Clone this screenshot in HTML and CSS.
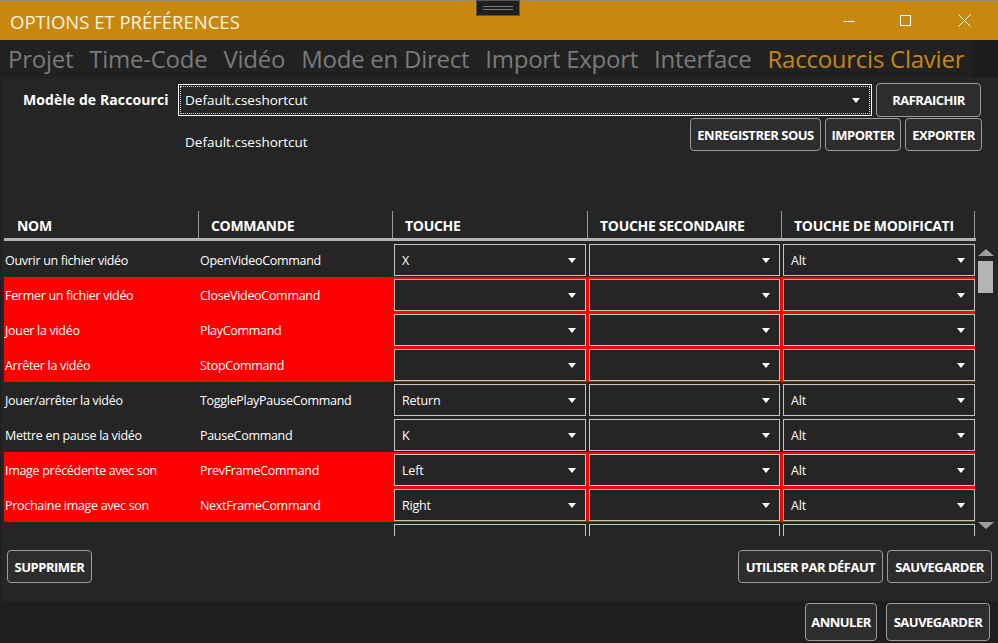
FILE: index.html
```html
<!DOCTYPE html>
<html lang="fr">
<head>
<meta charset="utf-8">
<title>Options et préférences</title>
<link rel="stylesheet" href="styles.css">
</head>
<body>
<div class="window">
  <div class="titlebar">
    <span class="title">OPTIONS ET PRÉFÉRENCES</span>
    <div class="winctrls">
      <span class="wc wc-min"><svg width="12" height="12" viewBox="0 0 12 12"><path d="M0.5 6.5h11" stroke="#fff" stroke-width="1"/></svg></span>
      <span class="wc wc-max"><svg width="12" height="12" viewBox="0 0 12 12"><rect x="0.5" y="0.5" width="10" height="10" fill="none" stroke="#fff" stroke-width="1"/></svg></span>
      <span class="wc wc-close"><svg width="13" height="13" viewBox="0 0 13 13"><path d="M0.5 0.5l12 12M12.5 0.5l-12 12" stroke="#fff" stroke-width="1"/></svg></span>
    </div>
    <div class="handle"><span></span><span></span></div>
  </div>

  <div class="tabstrip">
    <div class="tabs">
      <span class="tab">Projet</span>
      <span class="tab">Time-Code</span>
      <span class="tab">Vidéo</span>
      <span class="tab">Mode en Direct</span>
      <span class="tab">Import Export</span>
      <span class="tab">Interface</span>
      <span class="tab active">Raccourcis Clavier</span>
    </div>
  </div>

  <div class="panel">
    <div class="row1">
      <span class="lbl">Modèle de Raccourci</span>
      <div class="maincombo">
        <div class="focus">
          <span>Default.cseshortcut</span>
          <i class="arrow"></i>
        </div>
      </div>
      <button class="btn btn-refresh">RAFRAICHIR</button>
    </div>
    <div class="row2">
      <span class="filename">Default.cseshortcut</span>
      <div class="btns">
        <button class="btn b-save-as">ENREGISTRER SOUS</button>
        <button class="btn b-import">IMPORTER</button>
        <button class="btn b-export">EXPORTER</button>
      </div>
    </div>

    <div class="grid">
      <div class="ghead">
        <div class="hc">NOM</div>
        <div class="hc sep">COMMANDE</div>
        <div class="hc sep">TOUCHE</div>
        <div class="hc sep">TOUCHE SECONDAIRE</div>
        <div class="hc sep sepr">TOUCHE DE MODIFICATI</div>
      </div>
      <div class="gbody">
        <div class="rows">
          <div class="row">
            <div class="c">Ouvrir un fichier vidéo</div>
            <div class="c">OpenVideoCommand</div>
            <div class="cb"><span>X</span><i class="arrow"></i></div>
            <div class="cb"><span></span><i class="arrow"></i></div>
            <div class="cb"><span>Alt</span><i class="arrow"></i></div>
          </div>
          <div class="row red">
            <div class="c">Fermer un fichier vidéo</div>
            <div class="c">CloseVideoCommand</div>
            <div class="cb"><span></span><i class="arrow"></i></div>
            <div class="cb"><span></span><i class="arrow"></i></div>
            <div class="cb"><span></span><i class="arrow"></i></div>
          </div>
          <div class="row red">
            <div class="c">Jouer la vidéo</div>
            <div class="c">PlayCommand</div>
            <div class="cb"><span></span><i class="arrow"></i></div>
            <div class="cb"><span></span><i class="arrow"></i></div>
            <div class="cb"><span></span><i class="arrow"></i></div>
          </div>
          <div class="row red">
            <div class="c">Arrêter la vidéo</div>
            <div class="c">StopCommand</div>
            <div class="cb"><span></span><i class="arrow"></i></div>
            <div class="cb"><span></span><i class="arrow"></i></div>
            <div class="cb"><span></span><i class="arrow"></i></div>
          </div>
          <div class="row">
            <div class="c">Jouer/arrêter la vidéo</div>
            <div class="c">TogglePlayPauseCommand</div>
            <div class="cb"><span>Return</span><i class="arrow"></i></div>
            <div class="cb"><span></span><i class="arrow"></i></div>
            <div class="cb"><span>Alt</span><i class="arrow"></i></div>
          </div>
          <div class="row">
            <div class="c">Mettre en pause la vidéo</div>
            <div class="c">PauseCommand</div>
            <div class="cb"><span>K</span><i class="arrow"></i></div>
            <div class="cb"><span></span><i class="arrow"></i></div>
            <div class="cb"><span>Alt</span><i class="arrow"></i></div>
          </div>
          <div class="row red">
            <div class="c">Image précédente avec son</div>
            <div class="c">PrevFrameCommand</div>
            <div class="cb"><span>Left</span><i class="arrow"></i></div>
            <div class="cb"><span></span><i class="arrow"></i></div>
            <div class="cb"><span>Alt</span><i class="arrow"></i></div>
          </div>
          <div class="row red">
            <div class="c">Prochaine image avec son</div>
            <div class="c">NextFrameCommand</div>
            <div class="cb"><span>Right</span><i class="arrow"></i></div>
            <div class="cb"><span></span><i class="arrow"></i></div>
            <div class="cb"><span>Alt</span><i class="arrow"></i></div>
          </div>
          <div class="row">
            <div class="c"></div>
            <div class="c"></div>
            <div class="cb"><span></span><i class="arrow"></i></div>
            <div class="cb"><span></span><i class="arrow"></i></div>
            <div class="cb"><span></span><i class="arrow"></i></div>
          </div>
        </div>
        <div class="scrollbar">
          <i class="sb-up"></i>
          <div class="sb-track"><div class="sb-thumb"></div></div>
          <i class="sb-down"></i>
        </div>
      </div>
    </div>

    <div class="panelbtns">
      <button class="btn b-del">SUPPRIMER</button>
      <div class="btns">
        <button class="btn b-default">UTILISER PAR DÉFAUT</button>
        <button class="btn b-save1">SAUVEGARDER</button>
      </div>
    </div>
  </div>

  <div class="footer">
    <button class="btn b-cancel">ANNULER</button>
    <button class="btn b-save2">SAUVEGARDER</button>
  </div>
</div>
</body>
</html>
```

FILE: styles.css
```css
* { box-sizing: border-box; }
html, body { margin: 0; padding: 0; }
body {
  width: 998px;
  height: 643px;
  overflow: hidden;
  background: #1e1e1e;
  font-family: "Open Sans", "Noto Sans", "DejaVu Sans", sans-serif;
  color: #ffffff;
}
.window { display: flex; flex-direction: column; height: 643px; }

/* title bar */
.titlebar {
  position: relative;
  height: 40px;
  background: #c8870f;
  border-top: 1px solid #8a8a8a;
  display: flex;
  align-items: center;
  padding-left: 10px;
}
.title {
  font-size: 18.5px;
  font-weight: 400;
  color: #fbf3e4;
  margin-top: 2px;
  letter-spacing: 0;
}
.winctrls { margin-left: auto; display: flex; align-items: center; height: 100%; }
.wc { display: flex; align-items: center; justify-content: center; width: 58px; height: 100%; }
.wc svg { display: block; }
.wc-min { margin-right: -1px; }
.wc-close { margin-right: 5px; }
.handle {
  position: absolute;
  left: 476px;
  top: -1px;
  width: 44px;
  height: 16px;
  background: #1f1f1f;
  border: 1px solid #555;
  display: flex;
  flex-direction: column;
  justify-content: center;
  align-items: center;
  gap: 2px;
}
.handle span { display: block; width: 30px; height: 1px; background: #7a7a7a; }

/* tabs */
.tabstrip { height: 38px; background: #1c1c1c; }
.tabs {
  width: 972px;
  height: 38px;
  background: #212121;
  display: flex;
  align-items: center;
  gap: 16px;
  padding-left: 8px;
}
.tab { font-size: 24px; color: #7a7a7a; line-height: 1; margin-top: 0; letter-spacing: -0.25px; }
.tab.active { color: #c8870f; }

/* panel */
.panel {
  height: 523px;
  margin-left: 1px;
  background: #252525;
  display: flex;
  flex-direction: column;
}
.row1 {
  display: flex;
  align-items: center;
  margin-top: 5px;
  height: 34px;
}
.lbl {
  flex: 0 0 177px;
  width: 177px;
  padding-left: 22px;
  font-size: 14px;
  font-weight: 700;
  white-space: nowrap;
  letter-spacing: 0.1px;
  margin-top: -1px;
}
.maincombo {
  flex: 0 0 694px;
  width: 694px;
  height: 32px;
  border: 1px solid #ffffff;
  padding: 1px;
  align-self: flex-start;
  margin-top: 1px;
}
.focus {
  height: 100%;
  border: 1px dotted #dcdcdc;
  display: flex;
  align-items: center;
  padding-left: 4px;
  padding-right: 9px;
  font-size: 13.5px;
}
.focus span { flex: 1; margin-top: -1px; }
.arrow {
  display: block;
  width: 0; height: 0;
  border-left: 4.5px solid transparent;
  border-right: 4.5px solid transparent;
  border-top: 5px solid #ffffff;
}
.btn {
  font-family: "Open Sans", "Noto Sans", sans-serif;
  background: #2d2d2d;
  color: #ffffff;
  border: 1.5px solid #9c9c9c;
  border-radius: 4px;
  font-weight: 700;
  font-size: 13px;
  letter-spacing: -0.5px;
  padding: 0;
  height: 33px;
  cursor: default;
  flex-shrink: 0;
}
.btn-refresh { width: 105px; height: 34px; margin-left: 4px; }

.row2 {
  display: flex;
  margin-top: 1px;
  height: 33px;
}
.filename { padding-left: 184px; padding-top: 15px; font-size: 13.5px; }
.btns { margin-left: auto; display: flex; gap: 4px; }
.row2 .btns { margin-right: 16px; }
.b-save-as { width: 131px; }
.b-import { width: 76px; }
.b-export { width: 77px; }

/* grid */
.grid { margin-top: 59px; margin-left: 3px; width: 990px; }
.ghead {
  display: grid;
  grid-template-columns: 194px 194px 195px 194px 194px;
  height: 31px;
  width: 972px;
  border-bottom: 3px solid #b4b4b4;
}
.hc {
  font-size: 14px;
  font-weight: 700;
  padding-left: 13px;
  padding-top: 6px;
  letter-spacing: -0.3px;
  white-space: nowrap;
  overflow: hidden;
}
.hc.sep { border-left: 1px solid #9a9a9a; margin-top: 1px; padding-top: 5px; padding-left: 12px; }
.hc.sepr { border-right: 1px solid #9a9a9a; }
.gbody { display: flex; height: 294px; margin-top: 1px; }
.rows { width: 972px; overflow: hidden; }
.row {
  display: grid;
  grid-template-columns: 194px 194px 195px 194px 195px;
  height: 35px;
}
.row.red { background: #ff0000; }
.c {
  font-size: 12.5px;
  display: flex;
  align-items: center;
  padding-left: 1px;
  padding-top: 2px;
  letter-spacing: -0.3px;
  white-space: nowrap;
}
.c + .c { padding-left: 2px; }
.cb {
  margin: 2px 1px 1px 2px;
  border: 1.5px solid #c4c4c4;
  background: #252525;
  display: flex;
  align-items: center;
  padding-left: 7px;
  padding-right: 9px;
  font-size: 12.5px;
  letter-spacing: -0.2px;
}
.cb span { flex: 1; }

.scrollbar {
  width: 17px;
  margin-left: 2px;
  display: flex;
  flex-direction: column;
  align-items: center;
}
.sb-up, .sb-down {
  display: block;
  width: 0; height: 0;
  border-left: 8px solid transparent;
  border-right: 8px solid transparent;
}
.sb-up { border-bottom: 7px solid #9e9e9e; margin-top: 7px; }
.sb-down { border-top: 7px solid #9e9e9e; margin-top: auto; margin-bottom: 7px; }
.sb-track { width: 15px; padding-top: 5px; }
.sb-thumb { width: 15px; height: 32px; background: #b4b4b4; }

.panelbtns {
  display: flex;
  margin-top: 14px;
  padding: 0 6px 0 6px;
}
.b-del { width: 85px; }
.b-default { width: 145px; }
.b-save1 { width: 105px; }

.footer {
  flex: 1;
  display: flex;
  justify-content: flex-end;
  gap: 9px;
  padding-top: 2px;
  padding-right: 8px;
}
.b-cancel { width: 72px; height: 38px; }
.b-save2 { width: 104px; height: 38px; }
```
